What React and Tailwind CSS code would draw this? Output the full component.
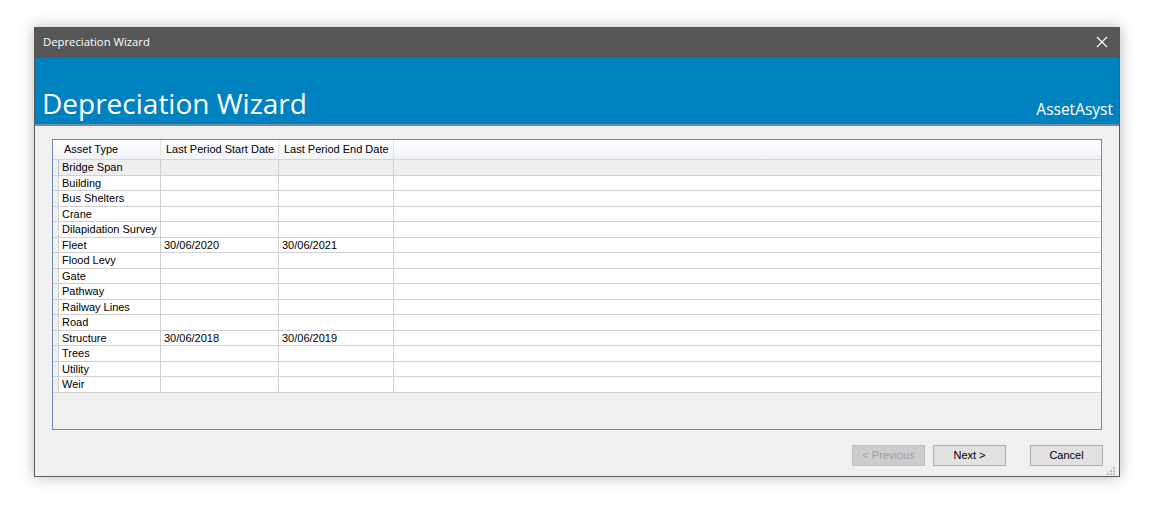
import React from "react";

const rows = [
    { type: "Bridge Span", start: "", end: "", current: true },
    { type: "Building", start: "", end: "" },
    { type: "Bus Shelters", start: "", end: "" },
    { type: "Crane", start: "", end: "" },
    { type: "Dilapidation Survey", start: "", end: "" },
    { type: "Fleet", start: "30/06/2020", end: "30/06/2021" },
    { type: "Flood Levy", start: "", end: "" },
    { type: "Gate", start: "", end: "" },
    { type: "Pathway", start: "", end: "" },
    { type: "Railway Lines", start: "", end: "" },
    { type: "Road", start: "", end: "" },
    { type: "Structure", start: "30/06/2018", end: "30/06/2019" },
    { type: "Trees", start: "", end: "" },
    { type: "Utility", start: "", end: "" },
    { type: "Weir", start: "", end: "" },
];

function WinButton({ children, disabled }) {
    return (
        <button
            className={
                disabled
                    ? "w-[73px] h-[21px] border border-[#bfbfbf] bg-[#cccccc] text-[#a0a0a0] text-[11px] leading-none"
                    : "w-[73px] h-[21px] border border-[#adadad] bg-[#e1e1e1] text-black text-[11px] leading-none"
            }
        >
            {children}
        </button>
    );
}

export default function App() {
    return (
        <div className="w-full h-[511px] bg-white pt-[27px] pl-[34px] overflow-hidden" style={{ fontFamily: '"Liberation Sans", Arial, sans-serif' }}>
            <div className="w-[1086px] h-[450px] flex flex-col border-l border-r border-b border-[#5a5a5a] shadow-[0_0_14px_rgba(0,0,0,0.28)] bg-[#f0f0f0]">
                {/* Title bar */}
                <div className="h-[31px] bg-[#575757] flex items-center justify-between pl-[8px] pr-[9px] pb-[1px] text-white text-[11.3px]" style={{ fontFamily: '"Open Sans", "Noto Sans", sans-serif' }}>
                    <span>Depreciation Wizard</span>
                    <svg width="12" height="12" viewBox="0 0 12 12" className="mr-[2px]">
                        <path d="M1 1 L11 11 M11 1 L1 11" stroke="#ffffff" strokeWidth="1.2" />
                    </svg>
                </div>

                {/* Banner */}
                <div className="h-[66px] bg-[#0082c0] flex items-end justify-between pl-[7px] pr-[6px] text-white" style={{ fontFamily: '"Open Sans", "Noto Sans", sans-serif' }}>
                    <span className="text-[28px] leading-none pb-[7px]">Depreciation Wizard</span>
                    <span className="text-[15.5px] leading-none pb-[7px]">AssetAsyst</span>
                </div>
                <div className="h-[2px] bg-[#6f8ca3]" />

                {/* Body */}
                <div className="flex-1 flex flex-col pl-[17px] pt-[13px]">
                    <div className="w-[1050px] h-[291px] border border-[#6e8bae] bg-[#f0f0f0] text-[11px] text-black">
                        {/* Header */}
                        <div className="flex h-[20px] bg-gradient-to-b from-white to-[#f1f3f7] border-b border-[#d5d5d5]">
                            <div className="w-[6px]" />
                            <div className="w-[102px] border-r border-[#e3e3e3] pl-[5px] flex items-center">Asset Type</div>
                            <div className="w-[118px] border-r border-[#e3e3e3] pl-[5px] flex items-center">Last Period Start Date</div>
                            <div className="w-[115px] border-r border-[#e3e3e3] pl-[5px] flex items-center">Last Period End Date</div>
                            <div className="flex-1" />
                        </div>
                        {rows.map((r) => (
                            <div key={r.type} className={r.current ? "flex h-[15.5px] bg-[#efefef] border-b border-[#d0d0d0]" : "flex h-[15.5px] bg-white border-b border-[#d0d0d0]"}>
                                <div className={r.current ? "w-[6px] bg-[#f0f0f0] border-r border-[#9fc4e8]" : "w-[6px] bg-[#f0f0f0] border-r border-[#d0d0d0]"} />
                                <div className="w-[102px] border-r border-[#d0d0d0] pl-[3px] flex items-center">{r.type}</div>
                                <div className="w-[118px] border-r border-[#d0d0d0] pl-[3px] flex items-center">{r.start}</div>
                                <div className="w-[115px] border-r border-[#d0d0d0] pl-[3px] flex items-center">{r.end}</div>
                                <div className="flex-1" />
                            </div>
                        ))}
                    </div>

                    {/* Buttons */}
                    <div className="w-[1051px] flex justify-end items-center mt-[15px]">
                        <WinButton disabled>&lt; Previous</WinButton>
                        <div className="w-[8px]" />
                        <WinButton>Next &gt;</WinButton>
                        <div className="w-[24px]" />
                        <WinButton>Cancel</WinButton>
                    </div>
                    <div className="flex justify-end pr-[3px] mt-[1px]">
                        <svg width="9" height="9" viewBox="0 0 9 9">
                            <rect x="6" y="0" width="2" height="2" fill="#bdbdbd" />
                            <rect x="3" y="3" width="2" height="2" fill="#bdbdbd" />
                            <rect x="6" y="3" width="2" height="2" fill="#bdbdbd" />
                            <rect x="0" y="6" width="2" height="2" fill="#bdbdbd" />
                            <rect x="3" y="6" width="2" height="2" fill="#bdbdbd" />
                            <rect x="6" y="6" width="2" height="2" fill="#bdbdbd" />
                        </svg>
                    </div>
                </div>
            </div>
        </div>
    );
}
